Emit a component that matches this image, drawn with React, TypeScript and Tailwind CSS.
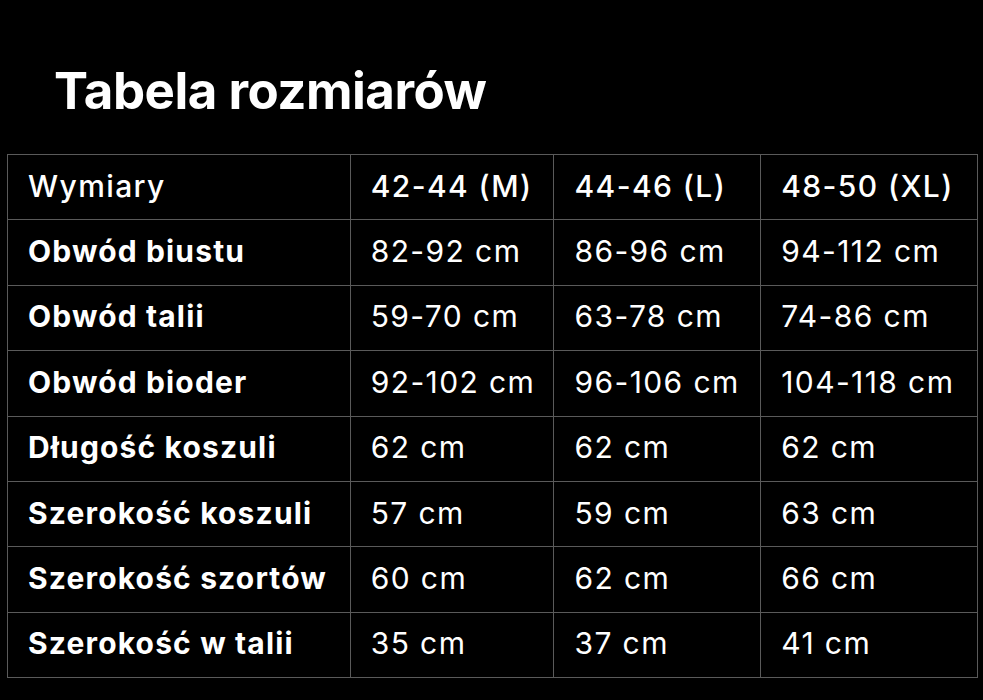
const headers = ["Wymiary", "42-44 (M)", "44-46 (L)", "48-50 (XL)"];

const rows: string[][] = [
  ["Obwód biustu", "82-92 cm", "86-96 cm", "94-112 cm"],
  ["Obwód talii", "59-70 cm", "63-78 cm", "74-86 cm"],
  ["Obwód bioder", "92-102 cm", "96-106 cm", "104-118 cm"],
  ["Długość koszuli", "62 cm", "62 cm", "62 cm"],
  ["Szerokość koszuli", "57 cm", "59 cm", "63 cm"],
  ["Szerokość szortów", "60 cm", "62 cm", "66 cm"],
  ["Szerokość w talii", "35 cm", "37 cm", "41 cm"],
];

const cell = "h-[65.4px] border border-[#5a5a5a] pl-[20px] pb-[2px] text-left align-middle";

const App = () => {
  return (
    <div className="h-[700px] w-[983px] overflow-hidden bg-black font-['Inter',sans-serif] text-white">
      <h1 className="pl-[54px] pt-[61px] text-[51px] font-bold leading-[60px] tracking-[-0.5px]">
        Tabela rozmiarów
      </h1>
      <table className="ml-[7px] mt-[33px] w-[971px] border-collapse text-[30px] tracking-[1.4px]">
        <colgroup>
          <col className="w-[343px]" />
          <col className="w-[204px]" />
          <col className="w-[207px]" />
          <col className="w-[217px]" />
        </colgroup>
        <thead>
          <tr>
            {headers.map((h) => (
              <th key={h} className={`${cell} font-medium`}>
                {h}
              </th>
            ))}
          </tr>
        </thead>
        <tbody>
          {rows.map((r) => (
            <tr key={r[0]}>
              {r.map((v, i) => (
                <td
                  key={i}
                  className={`${cell} ${i === 0 ? "font-bold tracking-[1.15px]" : "font-normal"}`}
                >
                  {v}
                </td>
              ))}
            </tr>
          ))}
        </tbody>
      </table>
    </div>
  );
};

export default App;
